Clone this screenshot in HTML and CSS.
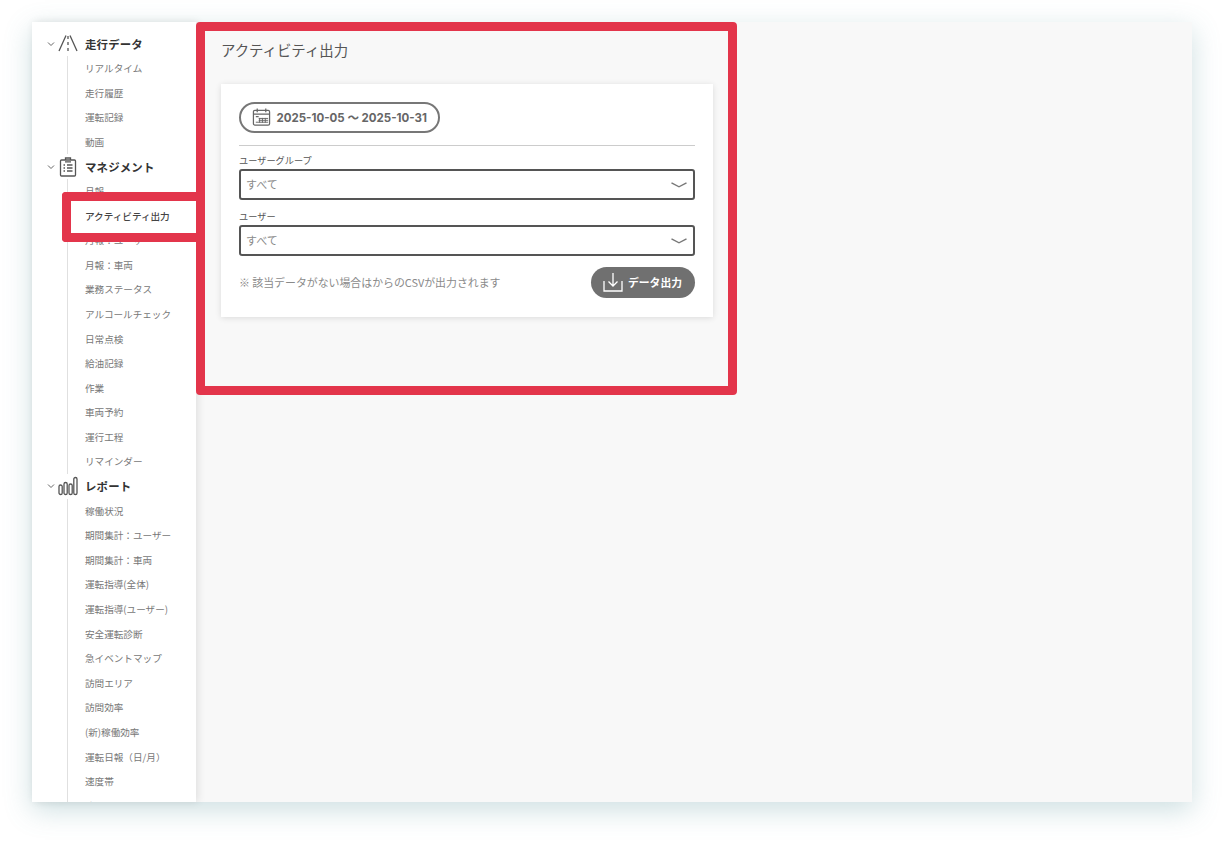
FILE: index.html
```html
<!DOCTYPE html>
<html lang="ja">
<head>
  <meta charset="utf-8">
  <title>アクティビティ出力</title>
  <link rel="stylesheet" href="styles.css">
</head>
<body>
  <div class="window">
    <nav class="sidebar">
      <div class="nav-head">
        <svg class="chev" viewBox="0 0 8 6"><path d="M1 1.5 4 4.5 7 1.5"/></svg>
        <svg class="nav-icon" viewBox="0 0 20 20"><path d="M8 1.5 1 17M12 1.5 19 17M10 2V5M10 8V11M10 14V17"/></svg>
        <span>走行データ</span>
      </div>
      <ul class="nav-list">
        <li>リアルタイム</li>
        <li>走行履歴</li>
        <li>運転記録</li>
        <li>動画</li>
      </ul>
      <div class="nav-head">
        <svg class="chev" viewBox="0 0 8 6"><path d="M1 1.5 4 4.5 7 1.5"/></svg>
        <svg class="nav-icon" viewBox="0 0 20 20"><rect x="2.5" y="3" width="15" height="16" rx="1"/><path d="M7.5 3V1H12.5V3M7 4.8H13M5.5 8H7M9 8H14.5M5.5 11H7M9 11H14.5M5.5 14H7M9 14H14.5"/></svg>
        <span>マネジメント</span>
      </div>
      <ul class="nav-list">
        <li>月報</li>
        <li class="current">アクティビティ出力</li>
        <li>月報：ユーザー</li>
        <li>月報：車両</li>
        <li>業務ステータス</li>
        <li>アルコールチェック</li>
        <li>日常点検</li>
        <li>給油記録</li>
        <li>作業</li>
        <li>車両予約</li>
        <li>運行工程</li>
        <li>リマインダー</li>
      </ul>
      <div class="nav-head">
        <svg class="chev" viewBox="0 0 8 6"><path d="M1 1.5 4 4.5 7 1.5"/></svg>
        <svg class="nav-icon" viewBox="0 0 20 20"><rect x="1" y="9" width="3.2" height="9.5" rx="1.6"/><rect x="6" y="6.5" width="3.2" height="12" rx="1.6"/><rect x="11" y="8" width="3.2" height="10.5" rx="1.6"/><rect x="15.8" y="1.5" width="3.2" height="17" rx="1.6"/></svg>
        <span>レポート</span>
      </div>
      <ul class="nav-list">
        <li>稼働状況</li>
        <li>期間集計：ユーザー</li>
        <li>期間集計：車両</li>
        <li>運転指導(全体)</li>
        <li>運転指導(ユーザー)</li>
        <li>安全運転診断</li>
        <li>急イベントマップ</li>
        <li>訪問エリア</li>
        <li>訪問効率</li>
        <li>(新)稼働効率</li>
        <li>運転日報（日/月）</li>
        <li>速度帯</li>
        <li>法令帳票</li>
      </ul>
    </nav>

    <main class="content">
      <h1 class="page-title">アクティビティ出力</h1>
      <section class="card">
        <div class="date-range">
          <svg class="cal-icon" viewBox="0 0 20 20">
            <rect x="1.5" y="3" width="17" height="15.5" rx="1.5"/>
            <path d="M5.5 1V5M14.5 1V5M1.5 7H18.5M4 9.5H7"/>
            <path class="cal-grid" d="M7 11.5H17M7 13.5H17M4 15.5H17M8 11V16M11 11V16M14 11V16"/>
          </svg>
          <span>2025-10-05 ～ 2025-10-31</span>
        </div>
        <div class="field">
          <label class="field-label">ユーザーグループ</label>
          <div class="select">
            <span>すべて</span>
            <svg class="select-arrow" viewBox="0 0 16 6"><path d="M.5 .8 8 4.8 15.5 .8"/></svg>
          </div>
        </div>
        <div class="field">
          <label class="field-label">ユーザー</label>
          <div class="select">
            <span>すべて</span>
            <svg class="select-arrow" viewBox="0 0 16 6"><path d="M.5 .8 8 4.8 15.5 .8"/></svg>
          </div>
        </div>
        <div class="card-foot">
          <p class="note">※ 該当データがない場合はからのCSVが出力されます</p>
          <button class="export-btn" type="button">
            <svg viewBox="0 0 20 20"><path d="M1 9V19H19V9M10 1V14M5.5 9.5 10 14 14.5 9.5"/></svg>
            データ出力
          </button>
        </div>
      </section>
    </main>

    <div class="mark mark-nav"></div>
    <div class="mark mark-main"></div>
  </div>
</body>
</html>
```

FILE: styles.css
```css
* {
  box-sizing: border-box;
}

body {
  min-height: 844px;
  margin: 0;
  padding: 22px 32px 0;
  background-color: #fff;
  font-family: "Noto Sans CJK JP", "Noto Sans", sans-serif;
  color: #555;
}

.window {
  position: relative;
  display: flex;
  width: 1160px;
  height: 780px;
  background-color: #f8f8f8;
  box-shadow: 0 8px 26px rgba(90, 150, 155, 0.3);
}

/* sidebar */
.sidebar {
  position: relative;
  flex: 0 0 164px;
  height: 780px;
  padding-top: 9.4px;
  overflow: hidden;
  background-color: #fff;
  box-shadow: 2px 0 8px rgba(0, 0, 0, 0.1);
}

.nav-head {
  display: flex;
  align-items: center;
  height: 24.6px;
  padding-left: 15px;
  font-size: 11.4px;
  font-weight: 700;
  letter-spacing: 0.2px;
  color: #333;
}

.chev {
  width: 8px;
  height: 6px;
  margin-right: 3px;
  fill: none;
  stroke: #666;
  stroke-width: 1;
}

.nav-icon {
  width: 20px;
  height: 20px;
  margin-right: 7px;
  fill: none;
  stroke: #555;
  stroke-width: 1.3;
}

.nav-list {
  margin: 0 0 0 35px;
  padding: 0 0 0 17px;
  list-style: none;
  border-left: 1px solid #e0e0e0;
}

.nav-list li {
  height: 24.6px;
  font-size: 9.6px;
  line-height: 24.4px;
  white-space: nowrap;
  color: #777;
}

.nav-list .current {
  font-weight: 500;
  color: #444;
}

/* main */
.content {
  flex: 1;
  padding: 17px 25px;
}

.page-title {
  margin: 0 0 24px;
  font-size: 14.4px;
  font-weight: 400;
  line-height: 21px;
  color: #555;
}

.card {
  width: 492px;
  height: 233px;
  padding: 18px;
  background-color: #fff;
  box-shadow: 0 1px 6px rgba(0, 0, 0, 0.12);
}

.date-range {
  display: inline-flex;
  align-items: center;
  height: 31px;
  padding: 0 10.5px 1px;
  border: 2px solid #777;
  border-radius: 16px;
  font-family: "Inter", "Noto Sans CJK JP", sans-serif;
  font-size: 11.5px;
  font-weight: 700;
  color: #666;
}

.cal-icon {
  width: 19px;
  height: 20px;
  margin-right: 6px;
  fill: none;
  stroke: #666;
  stroke-width: 1.3;
}

.cal-grid {
  stroke-width: 1;
}

.field {
  margin-top: 11px;
}

.date-range + .field {
  margin-top: 12px;
  padding-top: 9px;
  border-top: 1px solid #ccc;
}

.field-label {
  display: block;
  height: 14px;
  font-size: 9.2px;
  line-height: 11px;
  color: #555;
}

.select {
  display: flex;
  align-items: center;
  justify-content: space-between;
  height: 31px;
  padding: 0 6px 2px 5px;
  background-color: #fff;
  border: 2px solid #555;
  border-radius: 3px;
  font-size: 11px;
  color: #8a8a8a;
}

.select-arrow {
  width: 16px;
  height: 6px;
  margin-top: 2px;
  fill: none;
  stroke: #777;
  stroke-width: 1.4;
}

.card-foot {
  display: flex;
  align-items: center;
  justify-content: space-between;
  margin-top: 11px;
}

.note {
  margin: 0 0 2px;
  font-size: 10.9px;
  color: #8a8a8a;
}

.export-btn {
  display: flex;
  align-items: center;
  width: 104px;
  height: 31px;
  padding: 0 0 2px 12px;
  background-color: #707070;
  border: none;
  border-radius: 16px;
  font-family: inherit;
  font-size: 10.8px;
  font-weight: 700;
  color: #fff;
}

.export-btn svg {
  width: 20px;
  height: 20px;
  margin-right: 5px;
  fill: none;
  stroke: #fff;
  stroke-width: 1.3;
}

/* red highlight frames on top of the screenshot */
.mark {
  position: absolute;
  border: 9px solid #e3354b;
  border-radius: 4px;
}

.mark-nav {
  left: 30px;
  top: 170px;
  width: 134px;
  height: 50px;
  border-right: none;
  border-radius: 4px 0 0 4px;
}

.mark-main {
  left: 164px;
  top: 0;
  width: 541px;
  height: 373px;
}
```
